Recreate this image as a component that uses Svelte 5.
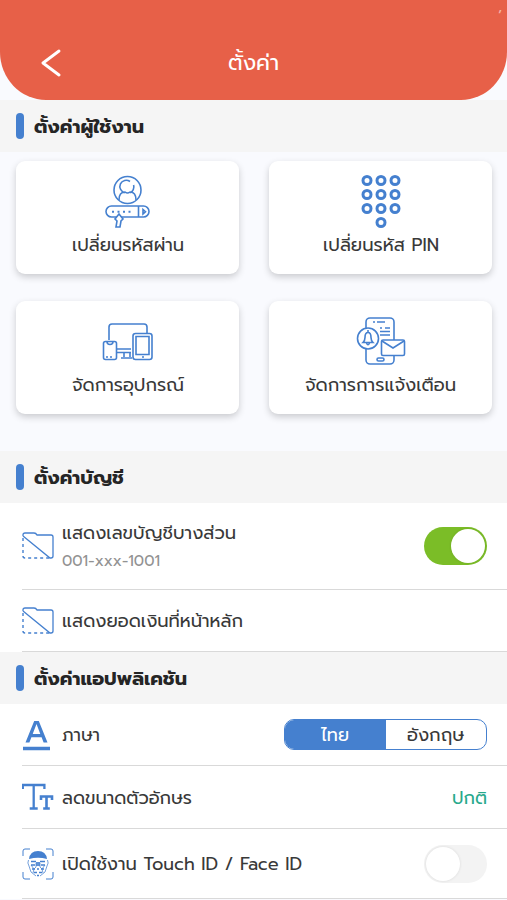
<script>
  let showNumber = $state(true);
  let biometric = $state(false);
  let language = $state('ไทย');
  const dots = [6, 20, 34].flatMap((y) => [6, 20, 34].map((x) => [x, y])).concat([[20, 48]]);
</script>

{#snippet label(text, width, size, kind = '')}
  <svg class="label {kind}" {width} height="24" role="img" aria-label={text}>
    <text x="0" y="17" font-size={size} textLength={width} lengthAdjust="spacingAndGlyphs">{text}</text>
  </svg>
{/snippet}

{#snippet folder()}
  <svg class="icon" width="32" height="28" viewBox="0 0 32 28">
    <path d="M1 4V3Q1 1 3 1h9q2 0 3 2h14q2 0 2 2v19q0 2-2 2h-1L1 4" stroke-width="1.3" />
    <path d="M1 6v18q0 2 2 2h25" stroke-width="1.4" stroke-dasharray="3 3" />
  </svg>
{/snippet}

{#snippet heading(text, width)}
  <h2><span class="bar"></span>{@render label(text, width, 18, 'bold')}</h2>
{/snippet}

<main>
  <header>
    <button class="back" aria-label="ย้อนกลับ">
      <svg width="20" height="28" viewBox="0 0 20 28"><path d="M18 2 2 14l16 12" fill="none" stroke="#fff" stroke-width="2.9" stroke-linecap="round" stroke-linejoin="round" /></svg>
    </button>
    {@render label('ตั้งค่า', 51, 21, 'white')}
    <span class="tick">’</span>
  </header>

  {@render heading('ตั้งค่าผู้ใช้งาน', 110)}
  <section class="cards">
    <button class="card">
      <svg class="icon" width="46" height="54" viewBox="0 0 46 54">
        <circle cx="22.500" cy="15" r="13.500" />
        <path d="M20 17.700a6.300 6.300 0 1 1 5-11.200M28.600 10a6.300 6.300 0 0 1-3.600 7.700M14 25q0-8 6-8 2.500 2 5 0 6 0 6 8" />
        <rect x="1" y="31" width="43" height="11" rx="5.500" />
        <path d="M33.500 31v11M38 34.500v4.500l2.500-2.250z" />
        <path d="M7 36.700h22" stroke-width="2" stroke-dasharray="2 3.500" />
        <path d="m14 39-4 5 2 2-1 6h4l1-6 2-2z" fill="white" />
      </svg>
      {@render label('เปลี่ยนรหัสผ่าน', 112, 18)}
    </button>
    <button class="card">
      <svg class="icon" width="40" height="54" viewBox="0 0 40 54">
        {#each dots as [x, y]}<circle cx={x} cy={y - 0.5} r="4" stroke-width="3" />{/each}
      </svg>
      {@render label('เปลี่ยนรหัส PIN', 116, 18)}
    </button>
    <button class="card">
      <svg class="icon" width="52" height="54" viewBox="0 0 52 54">
        <path d="M7 25V12q0-3 3-3h32q3 0 3 3v6M15 34h14M15 37.500h14M22 38v4M28 38v4M19 43h11" />
        <rect x="1.500" y="26.500" width="13" height="18" rx="2" />
        <path d="M5 26.500q0 3 3 3t3-3M4 42h2M8 42h2" />
        <rect x="31" y="18.500" width="19" height="26" rx="2.500" fill="white" />
        <path d="M34 21.500h13v18H34zM40 42h2" />
      </svg>
      {@render label('จัดการอุปกรณ์', 112, 18)}
    </button>
    <button class="card">
      <svg class="icon" width="50" height="54" viewBox="0 0 50 54">
        <rect x="10" y="3" width="28" height="46" rx="4" />
        <path d="M17 7h2m2 0h8M24 13h2m3 0h5M24 16.500h10M24 20h10" />
        <rect x="21" y="43" width="7" height="3" rx="1.500" />
        <circle cx="12" cy="23.500" r="10.500" fill="white" />
        <path d="M7 27.500q2-2 2-5 0-5 3-5t3 5q0 3 2 5zM12 15v2M10.500 28q1.500 3.500 3 0" />
        <rect x="25.500" y="25" width="23" height="15.500" rx="1.500" fill="white" />
        <path d="m26 26 11 7 11-7" />
      </svg>
      {@render label('จัดการการแจ้งเตือน', 151, 18)}
    </button>
  </section>

  {@render heading('ตั้งค่าบัญชี', 90)}
  <section class="list">
    <div class="row account">
      <span class="symbol">{@render folder()}</span>
      <div class="copy">
        {@render label('แสดงเลขบัญชีบางส่วน', 174, 18)}
        {@render label('001-xxx-1001', 98, 15, 'muted')}
      </div>
      <button class="switch" class:on={showNumber} aria-label="แสดงเลขบัญชีบางส่วน" onclick={() => (showNumber = !showNumber)}><span></span></button>
    </div>
    <div class="row balance">
      <span class="symbol">{@render folder()}</span>
      {@render label('แสดงยอดเงินที่หน้าหลัก', 181, 18)}
    </div>
  </section>

  {@render heading('ตั้งค่าแอปพลิเคชัน', 153)}
  <section class="list">
    <div class="row language">
      <span class="symbol">
        <svg class="icon" width="32" height="34" viewBox="0 0 32 34">
          <path d="M3.500 24.500 12.200 3h4.600l8.700 21.500h-3.900l-2-5.200H9.400l-2 5.200zM10.700 16h7.600L14.500 6z" fill="#4580cf" fill-rule="evenodd" stroke="none" />
          <path d="M1 30.500h27" stroke-width="3.500" />
        </svg>
      </span>
      {@render label('ภาษา', 38, 18)}
      <div class="segments">
        <button class:chosen={language === 'ไทย'} onclick={() => (language = 'ไทย')}>{@render label('ไทย', 28, 18)}</button>
        <button class:chosen={language === 'อังกฤษ'} onclick={() => (language = 'อังกฤษ')}>{@render label('อังกฤษ', 57, 18)}</button>
      </div>
    </div>
    <div class="row size">
      <span class="symbol">
        <svg class="icon" width="32" height="28" viewBox="0 0 32 28">
          <path d="M.8 6V2h21.600v4M11.700 2v23M7.700 25.500h8" stroke-width="2.300" />
          <path d="M19 17v-3.500h11V17M24.500 13.500v12M21.200 25.500h6.600" stroke-width="2.600" />
        </svg>
      </span>
      {@render label('ลดขนาดตัวอักษร', 130, 18)}
      <span class="value">{@render label('ปกติ', 35, 18, 'green')}</span>
    </div>
    <div class="row touch">
      <span class="symbol">
        <svg class="icon" width="32" height="32" viewBox="0 0 32 32">
          <path d="M1 8V3q0-2 2-2h5M24 1h5q2 0 2 2v5M31 24v5q0 2-2 2h-5M8 31H3q-2 0-2-2v-5" stroke-width="1" />
          <path d="M7 11Q8 3 16 3t9 8q-9-2.500-18 0z" fill="#4580cf" stroke="none" />
          <path d="M6.500 12q-1.500 3 .5 6l2 6 5 4M25.500 12q1.500 3-.5 6l-2 6-5 4M9 17l3 4-1 4M23 17l-3 4 1 4M14 15v4l-2 2M18 15v4l2 2" stroke-width="1" opacity=".75" />
          <path d="M9 13.500h5M18 13.500h5M9 17h4M19 17h4M15 14v4M17 14v4M10 21h3M15 21h2M19 21h3M12 24.500h3M17 24.500h3M15 27.500h2" stroke-width="1.700" />
        </svg>
      </span>
      {@render label('เปิดใช้งาน Touch ID / Face ID', 240, 18)}
      <button class="switch" class:on={biometric} aria-label="Touch ID / Face ID" onclick={() => (biometric = !biometric)}><span></span></button>
    </div>
  </section>
</main>

<style>
  :global(body) { margin: 0; background: #f5f5f5; overflow: hidden; }
  main {
    width: 507px;
    height: 900px;
    overflow: hidden;
    background: #f9fafe;
    font-family: 'Prompt', 'Noto Sans Thai', 'Noto Sans', 'Open Sans', sans-serif;
  }
  button { border: 0; padding: 0; background: none; font: inherit; }
  .label { display: block; flex: none; overflow: visible; fill: #393939; }
  .label.bold { font-weight: 700; fill: #252525; }
  .label.white, .chosen .label { fill: #fff; }
  .label.muted { fill: #929292; }
  .label.green { fill: #28a98c; }
  .icon { display: block; fill: none; stroke: #4580cf; stroke-width: 1.6; }
  header {
    position: relative;
    box-sizing: border-box;
    height: 100px;
    padding-top: 53px;
    display: flex;
    justify-content: center;
    background: #e76048;
    border-radius: 0 0 46px 46px / 0 0 48px 48px;
  }
  .back { position: absolute; left: 41px; top: 49px; }
  .back svg { display: block; }
  .tick { position: absolute; right: 5px; top: 7px; color: #f5b3a5; font-size: 16px; line-height: 20px; }
  h2 {
    margin: 0;
    height: 52px;
    display: flex;
    align-items: center;
    gap: 10px;
    padding-left: 16px;
    background: #f5f5f5;
  }
  .bar { width: 8px; height: 26px; border-radius: 4px; background: #4580cf; }
  h2 .label { margin-top: 4px; }
  .cards {
    box-sizing: border-box;
    height: 299px;
    padding: 9px 16px 0;
    display: grid;
    grid-template-columns: 223px 223px;
    grid-auto-rows: 113px;
    gap: 27px 30px;
    align-content: start;
  }
  .card {
    box-sizing: border-box;
    border-radius: 9px;
    background: #fff;
    box-shadow: 0 3px 7px #00000030;
    padding-top: 14px;
    display: flex;
    flex-direction: column;
    align-items: center;
    gap: 5px;
  }
  .list { background: #fff; }
  .row {
    box-sizing: border-box;
    margin-left: 22px;
    padding-right: 20px;
    display: flex;
    align-items: center;
    border-bottom: 1px solid #d9d9d9;
  }
  .row .label { margin-top: 3px; }
  .symbol { width: 40px; flex: none; display: flex; }
  .account { height: 87px; }
  .balance { height: 62px; }
  .language { height: 62px; }
  .size { height: 63px; }
  .touch { height: 70px; }
  .copy { display: grid; }
  .switch {
    box-sizing: border-box;
    width: 63px;
    height: 38px;
    margin-left: auto;
    padding: 2px;
    display: flex;
    border-radius: 19px;
    background: #f3f3f3;
  }
  .switch span { width: 34px; height: 34px; border-radius: 50%; background: #fff; box-shadow: 0 0 3px #0000001c; }
  .switch.on { justify-content: flex-end; background: #7bbd27; }
  .segments {
    box-sizing: border-box;
    width: 203px;
    height: 31px;
    margin-left: auto;
    display: flex;
    overflow: hidden;
    border: 1px solid #4580cf;
    border-radius: 10px;
  }
  .segments button { flex: 1; display: flex; justify-content: center; align-items: center; }
  .segments .chosen { background: #4580cf; }
  .value { margin-left: auto; }
</style>
